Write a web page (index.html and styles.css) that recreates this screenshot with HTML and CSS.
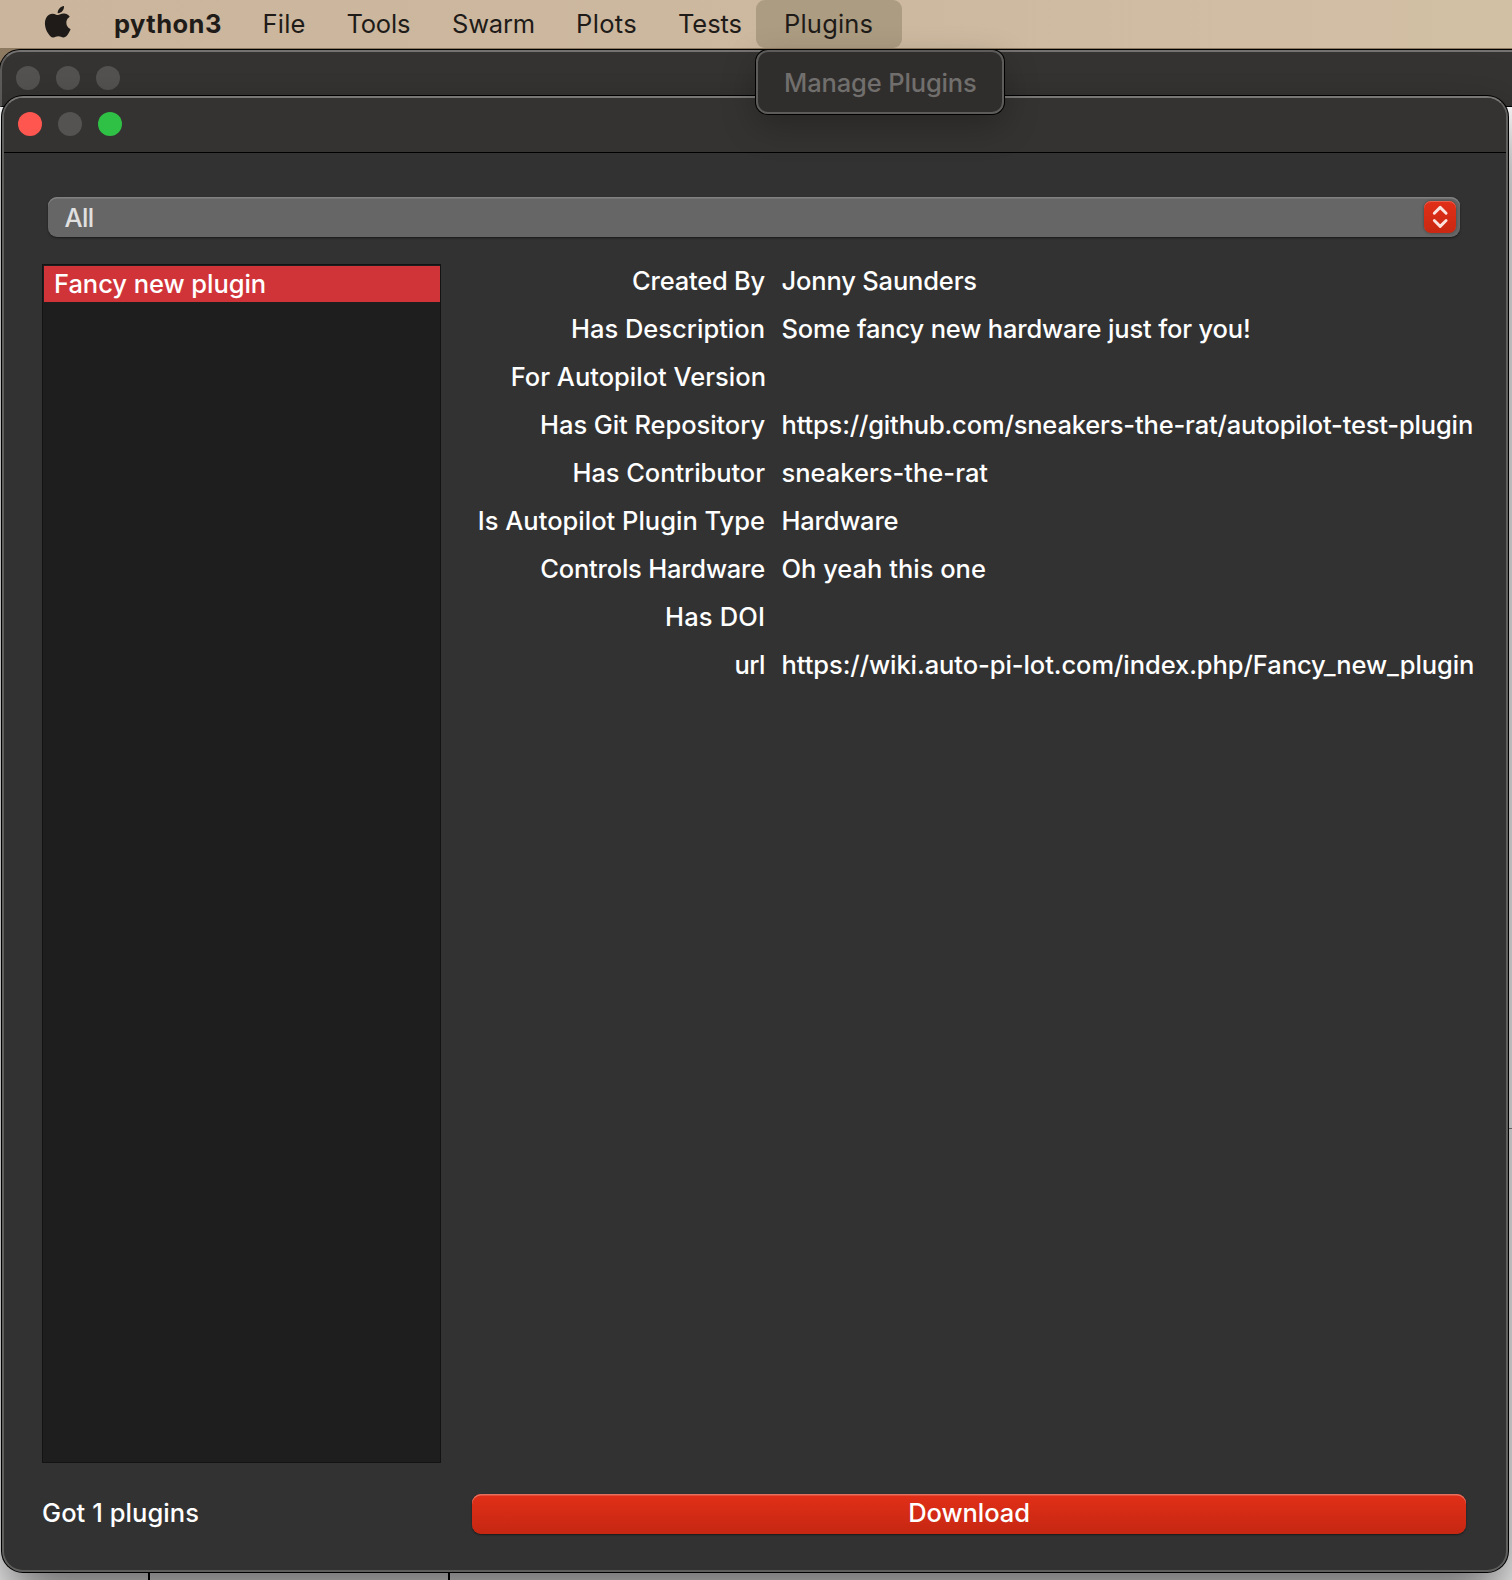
FILE: index.html
```html
<!DOCTYPE html>
<html lang="en">
<head>
<meta charset="utf-8">
<title>Manage Plugins</title>
<link rel="stylesheet" href="styles.css">
</head>
<body>
<div class="desktop">
  <nav class="menubar">
    <span class="apple"><svg width="31.5" height="31.5" viewBox="0 0 24 24" fill="currentColor"><path d="M12.152 6.896c-.948 0-2.415-1.078-3.96-1.04-2.04.027-3.91 1.183-4.961 3.014-2.117 3.675-.546 9.103 1.519 12.09 1.013 1.454 2.208 3.09 3.792 3.039 1.52-.065 2.09-.987 3.935-.987 1.831 0 2.35.987 3.96.948 1.637-.026 2.676-1.48 3.676-2.948 1.156-1.688 1.636-3.325 1.662-3.415-.039-.013-3.182-1.221-3.22-4.857-.026-3.04 2.48-4.494 2.597-4.559-1.429-2.09-3.623-2.324-4.39-2.376-2-.156-3.675 1.09-4.61 1.09zM15.53 3.83c.843-1.012 1.4-2.427 1.245-3.83-1.207.052-2.662.805-3.532 1.818-.78.896-1.454 2.338-1.273 3.714 1.338.104 2.715-.688 3.559-1.701"/></svg></span>
    <span class="menu app">python3</span>
    <span class="menu file">File</span>
    <span class="menu tools">Tools</span>
    <span class="menu swarm">Swarm</span>
    <span class="menu plots">Plots</span>
    <span class="menu tests">Tests</span>
    <span class="menu plugins">Plugins</span>
  </nav>

  <div class="back-window">
    <div class="back-title"><i class="light"></i><i class="light"></i><i class="light"></i></div>
  </div>
  <div class="back-content">
    <div class="back-rule"></div>
    <div class="back-cells"><i></i><i></i></div>
  </div>

  <main class="window">
    <header class="titlebar"><i class="light close"></i><i class="light"></i><i class="light zoom"></i></header>
    <div class="select">
      <span>All</span>
      <span class="stepper"><svg width="32" height="32" viewBox="0 0 32 32" fill="none" stroke="#fbe4e0" stroke-width="2.9" stroke-linecap="round" stroke-linejoin="round"><path d="M10.3 12.3 16.2 6.4l5.9 5.900M10.300 19.500l5.900 5.900 5.900-5.900"/></svg></span>
    </div>
    <div class="columns">
      <ul class="list"><li>Fancy new plugin</li></ul>
      <dl class="form">
        <dt class="n3">Created By</dt><dd class="n2">Jonny Saunders</dd>
        <dt>Has Description</dt><dd class="n2">Some fancy new hardware just for you!</dd>
        <dt class="edge">For Autopilot Version</dt><dd></dd>
        <dt class="n1">Has Git Repository</dt><dd class="n2">https://github.com/sneakers-the-rat/autopilot-test-plugin</dd>
        <dt class="n1">Has Contributor</dt><dd>sneakers-the-rat</dd>
        <dt>Is Autopilot Plugin Type</dt><dd class="n3">Hardware</dd>
        <dt class="n3">Controls Hardware</dt><dd>Oh yeah this one</dd>
        <dt class="w2">Has DOI</dt><dd></dd>
        <dt class="n4">url</dt><dd class="n1">https://wiki.auto-pi-lot.com/index.php/Fancy_new_plugin</dd>
      </dl>
    </div>
    <footer class="footer">
      <span class="status">Got 1 plugins</span>
      <button class="download">Download</button>
    </footer>
  </main>

  <div class="popup">Manage Plugins</div>
</div>
</body>
</html>
```
FILE: styles.css
```css
* { box-sizing: border-box; margin: 0; padding: 0; }

body {
  font-family: Inter, "Liberation Sans", sans-serif;
  font-size: 25.5px;
  line-height: 48px;
  color: #fff;
}

.desktop {
  position: relative;
  width: 1512px;
  height: 1580px;
  overflow: hidden;
  background: #8d7a60;
}

/* menu bar */
.menubar {
  display: flex;
  height: 48px;
  background: linear-gradient(90deg, #cbb59d, #cdb9a0 60%, #d2c0a5);
  color: #1e1b18;
}
.apple { width: 114px; padding: 6px 0 0 41.500px; line-height: 0; }
.app { width: 148.500px; font-weight: 700; letter-spacing: 0.45px; }
.file { width: 84px; letter-spacing: 0.2px; }
.tools { width: 105.500px; letter-spacing: -0.2px; }
.swarm { width: 124px; letter-spacing: -0.2px; }
.plots { width: 102px; letter-spacing: 0.35px; }
.tests { width: 78px; letter-spacing: -0.1px; }
.plugins {
  width: 146px;
  padding-left: 28px;
  letter-spacing: 0.2px;
  border-radius: 9px;
  background: #ac9c82;
}

.popup {
  position: absolute;
  left: 756px;
  top: 50px;
  width: 248px;
  height: 64px;
  padding-left: 26px;
  line-height: 61px;
  font-weight: 500;
  letter-spacing: -0.14px;
  border: 2px solid #5d5c5b;
  border-radius: 12px;
  background: #302e2c;
  color: #716f6d;
  box-shadow: 0 0 0 1px #000, 0 12px 34px rgba(0, 0, 0, 0.25);
}

/* window controls */
.light { width: 24px; height: 24px; border-radius: 50%; background: #545351; }
.close { background: #ff5650; }
.zoom { background: #2fc146; }

/* window behind */
.back-window {
  position: absolute;
  left: 0;
  top: 50px;
  width: 1560px;
  height: 57px;
  border: 2px solid #5d5c5a;
  border-top-color: #747371;
  border-bottom: 1px solid #000;
  border-radius: 20px 0 0 0;
  background: #363432;
  box-shadow: 0 0 0 1px #000;
}
.back-title { display: flex; gap: 16px; padding: 14px; }
.back-content {
  position: absolute;
  left: 0;
  top: 107px;
  display: flex;
  flex-direction: column;
  justify-content: space-between;
  width: 1512px;
  height: 1473px;
  padding-top: 1021px;
  background: #fff;
}
.back-rule { height: 1px; margin-left: 1500px; background: #888; }
.back-cells { display: flex; gap: 298px; height: 8px; padding-left: 148px; }
.back-cells i { width: 2px; background: #000; }

/* plugin manager window */
.window {
  position: absolute;
  left: 2px;
  top: 96px;
  width: 1506px;
  height: 1476px;
  border: 2px solid #5f5f5e;
  border-top-color: #787775;
  border-radius: 21px;
  background: #323232;
  box-shadow: 0 0 0 1px #000, 0 30px 60px rgba(0, 0, 0, 0.6);
}
.titlebar {
  display: flex;
  gap: 16px;
  height: 55px;
  padding: 14px;
  border-bottom: 1px solid #000;
  border-radius: 19px 19px 0 0;
  background: #353331;
}
.select {
  display: flex;
  justify-content: space-between;
  width: 1412px;
  height: 40px;
  margin: 44px 0 0 44px;
  padding: 4px 4px 4px 16.500px;
  line-height: 34px;
  font-weight: 500;
  border-radius: 9px;
  background: #666;
  color: #e0e0e0;
  letter-spacing: -0.6px;
  box-shadow: inset 0 1.5px 0 #818181, 0 1px 2px rgba(0, 0, 0, 0.5);
}
.stepper {
  width: 32px;
  height: 32px;
  line-height: 0;
  border-radius: 7px;
  background: linear-gradient(#e22f18, #c92812);
  box-shadow: inset 0 1px 0 #e8604e, 0 0 3px rgba(0, 0, 0, 0.4);
}

.columns { display: flex; gap: 34px; margin: 27px 0 0 38px; height: 1199px; }
.list {
  width: 399px;
  height: 1199px;
  padding: 1px 0 0 1px;
  list-style: none;
  border: 1px solid #131313;
  background: #1e1e1e;
}
.list li {
  width: 396px;
  height: 36px;
  padding-left: 10px;
  line-height: 36px;
  font-weight: 500;
  letter-spacing: -0.05px;
  background: #d03439;
}
.form {
  display: grid;
  grid-template-columns: 290px 1fr;
  grid-auto-rows: 48px;
  column-gap: 16.500px;
  margin-top: -7px;
  font-weight: 500;
  white-space: nowrap;
}
.form dt { text-align: right; }
.form .edge { margin-right: -1px; }
.form .w2 { letter-spacing: 0.15px; }
.form .n1 { letter-spacing: -0.07px; }
.form .n2 { letter-spacing: -0.17px; }
.form .n3 { letter-spacing: -0.22px; }
.form .n4 { letter-spacing: -0.5px; }

.footer { display: flex; margin: 31px 0 0 38px; font-weight: 500; }
.status { width: 430px; line-height: 38px; letter-spacing: 0.07px; }
.download {
  width: 994px;
  height: 40px;
  border: 0;
  border-radius: 9px;
  font: inherit;
  line-height: 37px;
  padding-bottom: 3px;
  letter-spacing: -0.06px;
  color: #fff;
  background: linear-gradient(#e22f18, #c52712);
  box-shadow: inset 0 1.5px 0 #e6705e, 0 1px 2px rgba(0, 0, 0, 0.5);
}
```
